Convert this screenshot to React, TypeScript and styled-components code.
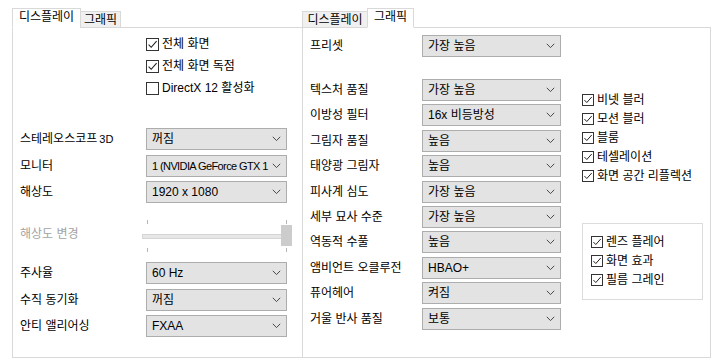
import * as React from "react";
import styled, { createGlobalStyle } from "styled-components";

// 페이지 기본 스타일
const GlobalStyle = createGlobalStyle`
  html, body {
    margin: 0;
    padding: 0;
    background: #ffffff;
  }
  body {
    font-family: "Liberation Sans", "Noto Sans CJK KR", sans-serif;
    font-size: 12px;
    color: #000;
  }
`;

// 전체 화면 (두 창을 가로로 배치)
const Page = styled.div`
  display: flex;
  width: 720px;
  height: 364px;
  padding: 8px 0 0 12px;
  box-sizing: border-box;
`;

const Window = styled.div<{ $width: number }>`
  display: flex;
  flex-direction: column;
  width: ${(p) => p.$width}px;
`;

const TabStrip = styled.div`
  display: flex;
  align-items: flex-end;
  height: 20px;
  position: relative;
  z-index: 1;
  margin-bottom: -1px;
`;

const Tab = styled.div<{ $active?: boolean; $width: number }>`
  box-sizing: border-box;
  width: ${(p) => p.$width}px;
  height: ${(p) => (p.$active ? 20 : 17)}px;
  display: flex;
  align-items: center;
  justify-content: center;
  padding-bottom: ${(p) => (p.$active ? 2 : 0)}px;
  border: 1px solid #d9d9d9;
  border-bottom: ${(p) => (p.$active ? "1px solid #fff" : "1px solid #d9d9d9")};
  background: ${(p) => (p.$active ? "#ffffff" : "#f0f0f0")};
  margin-right: -1px;
  line-height: 14px;
`;

const Panel = styled.div<{ $noRight?: boolean }>`
  box-sizing: border-box;
  height: 331px;
  border: 1px solid #d9d9d9;
  border-right: ${(p) => (p.$noRight ? "none" : "1px solid #d9d9d9")};
  background: #fff;
`;

// 왼쪽 창 (디스플레이)
const LeftContent = styled.div`
  padding: 5px 0 0 7px;
  display: flex;
  flex-direction: column;
`;

const CheckList = styled.div<{ $indent: number; $row: number }>`
  display: flex;
  flex-direction: column;
  margin-left: ${(p) => p.$indent}px;
  & > * {
    height: ${(p) => p.$row}px;
  }
`;

const FieldList = styled.div<{ $top: number; $gap: number }>`
  display: flex;
  flex-direction: column;
  gap: ${(p) => p.$gap}px;
  margin-top: ${(p) => p.$top}px;
`;

const FieldRow = styled.div<{ $labelWidth: number }>`
  display: grid;
  grid-template-columns: ${(p) => p.$labelWidth}px auto;
  align-items: center;
  height: 22px;
`;

const Label = styled.span<{ $disabled?: boolean }>`
  color: ${(p) => (p.$disabled ? "#a3a3a3" : "#000")};
  white-space: nowrap;
  line-height: 14px;
`;

const SmallTag = styled.span`
  font-size: 11px;
  margin-left: 2px;
`;

const Select = styled.div<{ $width: number }>`
  box-sizing: border-box;
  width: ${(p) => p.$width}px;
  height: 22px;
  display: flex;
  align-items: center;
  justify-content: space-between;
  padding: 0 5px 0 5px;
  background: #e3e3e3;
  border: 1px solid #adadad;
  overflow: hidden;
`;

const SelectText = styled.span<{ $tight?: boolean }>`
  white-space: nowrap;
  overflow: hidden;
  line-height: 14px;
  flex: 1;
  font-size: ${(p) => (p.$tight ? 11 : 12)}px;
  letter-spacing: ${(p) => (p.$tight ? "-0.6px" : "normal")};
`;

const Chevron = styled.svg`
  flex: none;
  margin-left: 1px;
`;

// 해상도 변경 슬라이더
const SliderRow = styled.div`
  display: grid;
  grid-template-columns: 122px auto;
  align-items: start;
  height: 50px;
`;

const SliderLabel = styled(Label)`
  margin-top: 19px;
`;

const Slider = styled.div`
  position: relative;
  width: 150px;
  height: 50px;
`;

const Track = styled.div`
  position: absolute;
  left: 0;
  right: 0;
  top: 26px;
  height: 3px;
  background: #e7e7e7;
  border: 1px solid #d6d6d6;
`;

const Tick = styled.div<{ $x: number; $y: number }>`
  position: absolute;
  left: ${(p) => p.$x}px;
  top: ${(p) => p.$y}px;
  width: 1px;
  height: 4px;
  background: #b5b5b5;
`;

const Thumb = styled.div`
  position: absolute;
  left: 139px;
  top: 17px;
  width: 11px;
  height: 21px;
  background: #cccccc;
`;

// 오른쪽 창 (그래픽)
const RightContent = styled.div`
  display: flex;
  padding: 7px 0 0 7px;
`;

const SettingsColumn = styled.div`
  display: flex;
  flex-direction: column;
`;

const SideColumn = styled.div`
  display: flex;
  flex-direction: column;
  margin-left: 21px;
  margin-top: 55px;
`;

const GroupBox = styled.div`
  box-sizing: border-box;
  width: 121px;
  height: 77px;
  margin-top: 38px;
  border: 1px solid #dcdcdc;
  padding: 8px 0 0 8px;
`;

const CheckRowBox = styled.label`
  display: flex;
  align-items: center;
  gap: 3px;
  white-space: nowrap;
  line-height: 14px;
`;

const CheckBoxBox = styled.span<{ $size: number }>`
  box-sizing: border-box;
  width: ${(p) => p.$size}px;
  height: ${(p) => p.$size}px;
  border: 1px solid #333;
  background: #fff;
  display: flex;
  align-items: center;
  justify-content: center;
  flex: none;
`;

const ChevronIcon = () => (
  <Chevron width="9" height="6" viewBox="0 0 9 6">
    <path d="M0.8 0.8 L4.5 4.6 L8.2 0.8" fill="none" stroke="#4a4a4a" strokeWidth="1" />
  </Chevron>
);

const Check: React.FC<{ label: string; checked?: boolean; size?: number }> = ({
  label,
  checked = true,
  size = 13,
}) => (
  <CheckRowBox>
    <CheckBoxBox $size={size}>
      {checked && (
        <svg width={size - 2} height={size - 2} viewBox="0 0 11 11">
          <path d="M1.6 5.6 L4.2 8.3 L9.6 2.2" fill="none" stroke="#222" strokeWidth="1.1" />
        </svg>
      )}
    </CheckBoxBox>
    <span>{label}</span>
  </CheckRowBox>
);

const Field: React.FC<{
  label: React.ReactNode;
  value: string;
  labelWidth: number;
  width: number;
  tight?: boolean;
}> = ({ label, value, labelWidth, width, tight }) => (
  <FieldRow $labelWidth={labelWidth}>
    <Label>{label}</Label>
    <Select $width={width}>
      <SelectText $tight={tight}>{value}</SelectText>
      <ChevronIcon />
    </Select>
  </FieldRow>
);

const graphicsFields = [
  ["텍스처 품질", "가장 높음"],
  ["이방성 필터", "16x 비등방성"],
  ["그림자 품질", "높음"],
  ["태양광 그림자", "높음"],
  ["피사계 심도", "가장 높음"],
  ["세부 묘사 수준", "가장 높음"],
  ["역동적 수풀", "높음"],
  ["앰비언트 오클루전", "HBAO+"],
  ["퓨어헤어", "켜짐"],
  ["거울 반사 품질", "보통"],
];

const effects = ["비넷 블러", "모션 블러", "블룸", "테셀레이션", "화면 공간 리플렉션"];
const filmEffects = ["렌즈 플레어", "화면 효과", "필름 그레인"];

export default function App() {
  return (
    <>
      <GlobalStyle />
      <Page>
        {/* 디스플레이 탭 */}
        <Window $width={290}>
          <TabStrip>
            <Tab $active $width={69}>디스플레이</Tab>
            <Tab $width={41}>그래픽</Tab>
          </TabStrip>
          <Panel $noRight>
            <LeftContent>
              <CheckList $indent={126} $row={22}>
                <Check label="전체 화면" />
                <Check label="전체 화면 독점" />
                <Check label="DirectX 12 활성화" checked={false} />
              </CheckList>
              <FieldList $top={29} $gap={4.5}>
                <Field
                  label={
                    <>
                      스테레오스코프<SmallTag>3D</SmallTag>
                    </>
                  }
                  value="꺼짐"
                  labelWidth={126}
                  width={141}
                />
                <Field label="모니터" value="1 (NVIDIA GeForce GTX 1" labelWidth={126} width={141} tight />
                <Field label="해상도" value="1920 x 1080" labelWidth={126} width={141} />
                <SliderRow>
                  <SliderLabel $disabled>해상도 변경</SliderLabel>
                  <Slider>
                    <Tick $x={5} $y={12} />
                    <Tick $x={144} $y={12} />
                    <Track />
                    <Thumb />
                    <Tick $x={5} $y={40} />
                    <Tick $x={144} $y={40} />
                  </Slider>
                </SliderRow>
                <Field label="주사율" value="60 Hz" labelWidth={126} width={141} />
                <Field label="수직 동기화" value="꺼짐" labelWidth={126} width={141} />
                <Field label="안티 앨리어싱" value="FXAA" labelWidth={126} width={141} />
              </FieldList>
            </LeftContent>
          </Panel>
        </Window>

        {/* 그래픽 탭 */}
        <Window $width={409}>
          <TabStrip>
            <Tab $width={66}>디스플레이</Tab>
            <Tab $active $width={47}>그래픽</Tab>
          </TabStrip>
          <Panel>
            <RightContent>
              <SettingsColumn>
                <Field label="프리셋" value="가장 높음" labelWidth={112} width={139} />
                <FieldList $top={22} $gap={3.4}>
                  {graphicsFields.map(([label, value]) => (
                    <Field key={label} label={label} value={value} labelWidth={112} width={139} />
                  ))}
                </FieldList>
              </SettingsColumn>
              <SideColumn>
                <CheckList $indent={0} $row={19}>
                  {effects.map((e) => (
                    <Check key={e} label={e} size={12} />
                  ))}
                </CheckList>
                <GroupBox>
                  <CheckList $indent={0} $row={19}>
                    {filmEffects.map((e) => (
                      <Check key={e} label={e} size={12} />
                    ))}
                  </CheckList>
                </GroupBox>
              </SideColumn>
            </RightContent>
          </Panel>
        </Window>
      </Page>
    </>
  );
}
